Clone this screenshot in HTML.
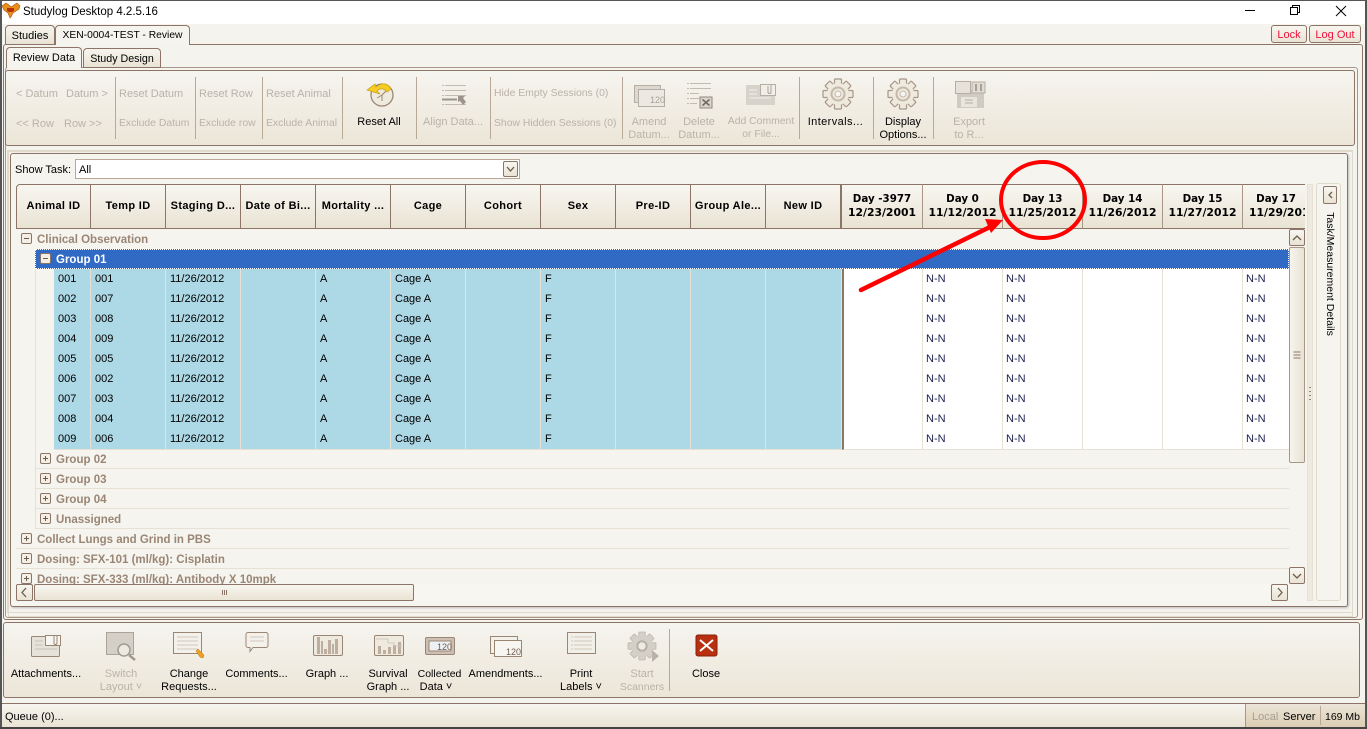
<!DOCTYPE html>
<html><head><meta charset="utf-8"><title>Studylog Desktop</title>
<style>
html,body{margin:0;padding:0;width:1367px;height:729px;overflow:hidden;background:#f5f3ee}
body{position:relative;font:11px "Liberation Sans",sans-serif;color:#000}
div,span{box-sizing:border-box}
.a{position:absolute}
.t{position:absolute;white-space:nowrap;line-height:14px;height:14px;margin-top:1px}
.c{transform:translateX(-50%)}
.d{color:#b9b2a9}
.n{font-size:10.4px}
.box{position:absolute;border:1px solid #8c7567;border-radius:3px}
.tab{position:absolute;border:1px solid #8c7567;border-radius:4px 4px 0 0;background:linear-gradient(#f6f4ee,#e9e3d4);text-align:center;line-height:20px;white-space:nowrap}
.act{background:#f6f4ef;border-bottom:0;z-index:2}
.sep{position:absolute;width:1px;background:#b9a898}
.h{position:absolute;top:184px;height:45px;border:1px solid #8c7567;border-left:0;background:linear-gradient(#f8f6f1,#e9e3d3);font-weight:bold;text-align:center;line-height:42px;font-size:11px;letter-spacing:.35px;white-space:nowrap;overflow:hidden}
.dy{line-height:13px;padding-top:8px;border-right-color:#a89688;font-family:"DejaVu Sans","Liberation Sans",sans-serif;font-size:10.3px;letter-spacing:0}
.dy b{font-size:10.8px;display:block}
.r{position:absolute;left:38px;height:20px;display:grid;grid-template-columns:37px repeat(9,75px) 76px 81px repeat(4,80px) 80px}
.r s,.r u{text-decoration:none;display:block;height:20px;line-height:21px;padding-left:4px;border-right:1px solid #e6e1d4;border-bottom:1px solid #e6e1d4;white-space:nowrap}
.r s{background:#add8e6}
.r u{background:#fff;padding-left:3px;color:#1a1f4d}
.r u:first-of-type{border-left:2px solid #8c7567}
.g{position:absolute;height:20px;border-bottom:1px solid #e6e1d4;color:#9a8675;font-weight:bold;font-size:11.5px;line-height:23px;white-space:nowrap;right:0}
.btn{position:absolute;border:1px solid #8c7567;border-radius:2px;background:linear-gradient(#f8f6f1,#e9e3d3)}
</style></head><body>

<!-- window frame -->
<div class="a" style="left:0;top:0;width:1367px;height:24px;background:#fff"></div>
<div class="a" style="left:0;top:0;width:2px;height:729px;background:#555"></div>
<div class="a" style="left:1365px;top:0;width:2px;height:729px;background:#555"></div>
<div class="a" style="left:0;top:727px;width:1367px;height:2px;background:#444"></div>
<div class="a" style="left:0;top:0;width:1367px;height:1px;background:#555"></div>
<div class="t" style="left:23px;top:5px;font-size:11.5px;margin-top:0">Studylog Desktop 4.2.5.16</div>

<!-- nested panels -->
<div class="box" style="left:3px;top:44px;width:1360px;height:576px;background:#f5f3ee"></div>
<div class="box" style="left:5px;top:67px;width:1353px;height:551px;background:#f5f3ee;border-color:#a89688"></div>
<div class="box" style="left:5px;top:70px;width:1350px;height:76px;background:linear-gradient(#f6f4ef,#ece6d8)"></div>
<div class="a" style="left:7px;top:150px;width:1346px;height:463px;border:1px solid #e0dacb;background:#f5f3ee"></div>
<div class="a" style="left:8px;top:151px;width:1345px;height:466px;border:1px solid #e0dacb"></div>
<div class="box" style="left:10px;top:153px;width:1338px;height:454px;background:#f6f4ef;box-shadow:1px 1px 2px #bbb"></div>

<!-- tabs -->
<div class="tab" style="left:5px;top:25px;width:50px;height:20px">Studies</div>
<div class="tab act" style="left:55px;top:25px;width:135px;height:20px;background:#f6f4ef;font-size:10.3px">XEN-0004-TEST - Review</div>
<div class="tab act" style="left:6px;top:47px;width:76px;height:21px;line-height:21px;background:#f6f4ef">Review Data</div>
<div class="tab" style="left:83px;top:48px;width:78px;height:20px;font-size:10.7px">Study Design</div>
<div class="btn" style="left:1271px;top:25px;width:36px;height:18px;color:#f0103c;text-align:center;line-height:18px;border-radius:3px">Lock</div>
<div class="btn" style="left:1309px;top:25px;width:52px;height:18px;color:#f0103c;text-align:center;line-height:18px;border-radius:3px">Log Out</div>

<!-- toolbar text -->
<div class="t d" style="left:16px;top:86px">&lt; Datum</div>
<div class="t d" style="left:66px;top:86px">Datum &gt;</div>
<div class="t d" style="left:16px;top:116px">&lt;&lt; Row</div>
<div class="t d" style="left:64px;top:116px">Row &gt;&gt;</div>
<div class="t d" style="left:119px;top:86px">Reset Datum</div>
<div class="t d n" style="left:119px;top:116px">Exclude Datum</div>
<div class="t d" style="left:199px;top:86px">Reset Row</div>
<div class="t d n" style="left:199px;top:116px">Exclude row</div>
<div class="t d" style="left:266px;top:86px">Reset Animal</div>
<div class="t d n" style="left:266px;top:116px">Exclude Animal</div>
<div class="t c" style="left:379px;top:114px">Reset All</div>
<div class="t d c" style="left:453px;top:114px">Align Data...</div>
<div class="t d n" style="left:494px;top:86px">Hide Empty Sessions (0)</div>
<div class="t d n" style="left:494px;top:116px">Show Hidden Sessions (0)</div>
<div class="t d c" style="left:649px;top:114px">Amend</div><div class="t d c" style="left:649px;top:127px">Datum...</div>
<div class="t d c" style="left:699px;top:114px">Delete</div><div class="t d c" style="left:699px;top:127px">Datum...</div>
<div class="t d c n" style="left:761px;top:114px">Add Comment</div><div class="t d c n" style="left:761px;top:127px">or File...</div>
<div class="t c" style="left:835.500px;top:114px;letter-spacing:.4px">Intervals...</div>
<div class="t c" style="left:903px;top:114px">Display</div><div class="t c" style="left:903px;top:127px">Options...</div>
<div class="t d c" style="left:969px;top:114px">Export</div><div class="t d c" style="left:969px;top:127px">to R...</div>
<div class="sep" style="left:115px;top:77px;height:62px"></div>
<div class="sep" style="left:195px;top:77px;height:62px"></div>
<div class="sep" style="left:262px;top:77px;height:62px"></div>
<div class="sep" style="left:342px;top:77px;height:62px"></div>
<div class="sep" style="left:416px;top:77px;height:62px"></div>
<div class="sep" style="left:490px;top:77px;height:62px"></div>
<div class="sep" style="left:622px;top:77px;height:62px"></div>
<div class="sep" style="left:799px;top:77px;height:62px"></div>
<div class="sep" style="left:873px;top:77px;height:62px"></div>
<div class="sep" style="left:933px;top:77px;height:62px"></div>

<!-- show task -->
<div class="t" style="left:15px;top:162px">Show Task:</div>
<div class="a" style="left:75px;top:159px;width:445px;height:20px;border:1px solid #b9a898;background:#fff;padding-left:3px;line-height:20px">All</div>
<div class="btn" style="left:503px;top:161px;width:15px;height:16px"></div>

<!-- headers -->
<div class="h" style="left:16px;width:75px;border-left:1px solid #8c7567;border-top-left-radius:4px">Animal ID</div>
<div class="h" style="left:91px;width:75px">Temp ID</div>
<div class="h" style="left:166px;width:75px">Staging D...</div>
<div class="h" style="left:241px;width:75px">Date of Bi...</div>
<div class="h" style="left:316px;width:75px">Mortality ...</div>
<div class="h" style="left:391px;width:75px">Cage</div>
<div class="h" style="left:466px;width:75px">Cohort</div>
<div class="h" style="left:541px;width:75px">Sex</div>
<div class="h" style="left:616px;width:75px">Pre-ID</div>
<div class="h" style="left:691px;width:75px">Group Ale...</div>
<div class="h" style="left:766px;width:76px;border-right:2px solid #8c7567">New ID</div>
<div class="h dy" style="left:842px;width:81px">Day -3977<b>12/23/2001</b></div>
<div class="h dy" style="left:923px;width:80px">Day 0<b>11/12/2012</b></div>
<div class="h dy" style="left:1003px;width:80px">Day 13<b>11/25/2012</b></div>
<div class="h dy" style="left:1083px;width:80px">Day 14<b>11/26/2012</b></div>
<div class="h dy" style="left:1163px;width:80px">Day 15<b>11/27/2012</b></div>
<div class="h dy" style="left:1243px;width:62px;border-right:0;text-align:left;padding-left:6px">&nbsp;&nbsp;Day 17<b>11/29/2012</b></div>

<!-- grid body -->
<div class="a" style="left:16px;top:229px;width:1273px;height:355px;overflow:hidden;background:#f6f4ef">
 <div class="g" style="left:0;top:0;padding-left:21px;border:0">Clinical Observation</div>
 <div class="a" style="left:19px;top:20px;width:1px;height:280px;background:#e6e1d4"></div>
 <div class="a" style="left:19px;top:20px;right:0;height:20px;background:#316ac5;border:1px dotted #fff;color:#fff;font-weight:bold;font-size:11.5px;padding-left:20px;line-height:20px">Group 01</div>
 <div class="r" style="top:40px"><s>001</s><s>001</s><s>11/26/2012</s><s></s><s>A</s><s>Cage A</s><s></s><s>F</s><s></s><s></s><s></s><u></u><u>N-N</u><u>N-N</u><u></u><u></u><u>N-N</u></div>
 <div class="r" style="top:60px"><s>002</s><s>007</s><s>11/26/2012</s><s></s><s>A</s><s>Cage A</s><s></s><s>F</s><s></s><s></s><s></s><u></u><u>N-N</u><u>N-N</u><u></u><u></u><u>N-N</u></div>
 <div class="r" style="top:80px"><s>003</s><s>008</s><s>11/26/2012</s><s></s><s>A</s><s>Cage A</s><s></s><s>F</s><s></s><s></s><s></s><u></u><u>N-N</u><u>N-N</u><u></u><u></u><u>N-N</u></div>
 <div class="r" style="top:100px"><s>004</s><s>009</s><s>11/26/2012</s><s></s><s>A</s><s>Cage A</s><s></s><s>F</s><s></s><s></s><s></s><u></u><u>N-N</u><u>N-N</u><u></u><u></u><u>N-N</u></div>
 <div class="r" style="top:120px"><s>005</s><s>005</s><s>11/26/2012</s><s></s><s>A</s><s>Cage A</s><s></s><s>F</s><s></s><s></s><s></s><u></u><u>N-N</u><u>N-N</u><u></u><u></u><u>N-N</u></div>
 <div class="r" style="top:140px"><s>006</s><s>002</s><s>11/26/2012</s><s></s><s>A</s><s>Cage A</s><s></s><s>F</s><s></s><s></s><s></s><u></u><u>N-N</u><u>N-N</u><u></u><u></u><u>N-N</u></div>
 <div class="r" style="top:160px"><s>007</s><s>003</s><s>11/26/2012</s><s></s><s>A</s><s>Cage A</s><s></s><s>F</s><s></s><s></s><s></s><u></u><u>N-N</u><u>N-N</u><u></u><u></u><u>N-N</u></div>
 <div class="r" style="top:180px"><s>008</s><s>004</s><s>11/26/2012</s><s></s><s>A</s><s>Cage A</s><s></s><s>F</s><s></s><s></s><s></s><u></u><u>N-N</u><u>N-N</u><u></u><u></u><u>N-N</u></div>
 <div class="r" style="top:200px"><s>009</s><s>006</s><s>11/26/2012</s><s></s><s>A</s><s>Cage A</s><s></s><s>F</s><s></s><s></s><s></s><u></u><u>N-N</u><u>N-N</u><u></u><u></u><u>N-N</u></div>
 <div class="g" style="left:19px;top:220px;padding-left:21px">Group 02</div>
 <div class="g" style="left:19px;top:240px;padding-left:21px">Group 03</div>
 <div class="g" style="left:19px;top:260px;padding-left:21px">Group 04</div>
 <div class="g" style="left:19px;top:280px;padding-left:21px">Unassigned</div>
 <div class="g" style="left:0;top:300px;padding-left:21px">Collect Lungs and Grind in PBS</div>
 <div class="g" style="left:0;top:320px;padding-left:21px">Dosing: SFX-101 (ml/kg): Cisplatin</div>
 <div class="g" style="left:0;top:340px;padding-left:21px">Dosing: SFX-333 (ml/kg): Antibody X 10mpk</div>
</div>

<!-- scrollbars -->
<div class="a" style="left:1289px;top:229px;width:17px;height:372px;background:#f6f4ef"></div>
<div class="btn" style="left:1289px;top:229px;width:16px;height:17px"></div>
<div class="btn" style="left:1289px;top:247px;width:16px;height:216px;background:linear-gradient(90deg,#f6f4ee,#e9e3d3);border-color:#a89688"></div>
<div class="btn" style="left:1289px;top:567px;width:16px;height:17px"></div>
<div class="a" style="left:16px;top:584px;width:1273px;height:17px;background:#f8f6f1"></div>
<div class="btn" style="left:16px;top:584px;width:17px;height:17px"></div>
<div class="btn" style="left:34px;top:584px;width:380px;height:17px"></div>
<div class="btn" style="left:1271px;top:584px;width:17px;height:17px"></div>

<!-- side strip -->
<div class="a" style="left:1307px;top:184px;width:6px;height:417px;background:#efeadf;border:1px solid #e6e1d4"></div>
<div class="a" style="left:1316px;top:183px;width:25px;height:418px;background:#f6f4ef;border:1px solid #e0dacb;border-radius:3px"></div>
<div class="btn" style="left:1323px;top:186px;width:14px;height:18px"></div>
<div class="t" style="left:1330px;top:274px;font-size:10.5px;margin-top:0;transform:translate(-50%,-50%) rotate(90deg);transform-origin:center">Task/Measurement Details</div>

<!-- bottom toolbar -->
<div class="box" style="left:3px;top:622px;width:1357px;height:76px;background:linear-gradient(#f6f4ef,#ece6d8)"></div>
<div class="t c" style="left:46px;top:666px">Attachments...</div>
<div class="t d c" style="left:121px;top:666px">Switch</div><div class="t d c" style="left:121px;top:679px">Layout ˅</div>
<div class="t c" style="left:189px;top:666px">Change</div><div class="t c" style="left:189px;top:679px">Requests...</div>
<div class="t c" style="left:256.500px;top:666px">Comments...</div>
<div class="t c" style="left:327px;top:666px">Graph ...</div>
<div class="t c" style="left:388px;top:666px">Survival</div><div class="t c" style="left:388px;top:679px">Graph ...</div>
<div class="t c" style="left:439.500px;top:666px;font-size:10.500px">Collected</div><div class="t c" style="left:436px;top:679px">Data ˅</div>
<div class="t c" style="left:505.500px;top:666px">Amendments...</div>
<div class="t c" style="left:581px;top:666px">Print</div><div class="t c" style="left:581px;top:679px">Labels ˅</div>
<div class="t d c" style="left:642px;top:666px">Start</div><div class="t d c" style="left:642px;top:679px;font-size:10.500px">Scanners</div>
<div class="sep" style="left:669px;top:629px;height:62px"></div>
<div class="t c" style="left:706px;top:666px">Close</div>

<!-- status bar -->
<div class="a" style="left:2px;top:703px;width:1363px;height:24px;border-top:1px solid #8c7567;background:linear-gradient(#f7f5f0,#eae3d4)"></div>
<div class="a" style="left:1245px;top:704px;width:120px;height:23px;border-left:1px solid #a89688;background:linear-gradient(#ece5d8,#dccdb3)"></div>
<div class="t" style="left:5px;top:709px">Queue (0)...</div>
<div class="t" style="left:1252px;top:709px;color:#a89f95">Local</div>
<div class="t" style="left:1283px;top:709px">Server</div>
<div class="sep" style="left:1320px;top:706px;height:19px"></div>
<div class="t" style="left:1325px;top:709px;font-size:10.500px">169 Mb</div>

<!-- icons overlay -->
<svg class="a" style="left:0;top:0" width="1367" height="729" viewBox="0 0 1367 729" font-family="Liberation Sans,sans-serif">
<defs>
<g id="gr"><rect x="-3.500" y="-15" width="7" height="30" rx="1"/><rect x="-3.500" y="-15" width="7" height="30" rx="1" transform="rotate(45)"/><rect x="-3.500" y="-15" width="7" height="30" rx="1" transform="rotate(90)"/><rect x="-3.500" y="-15" width="7" height="30" rx="1" transform="rotate(135)"/></g>
<g id="gear"><use href="#gr" fill="#efeade" stroke="#a89688" stroke-width="1.200"/><circle r="11" fill="#efeade"/><circle r="6.500" fill="none" stroke="#c4b8ab" stroke-width="2"/><circle r="3" fill="#f8f6f1" stroke="#c4b8ab"/></g>
</defs>

<!-- logo -->
<path d="M2 6l4-3 3 2 2 2 3-2 3-2 3 3-1 3-3 2-3 2-2 4-1 1-2-5-4-3z" fill="#e89018" stroke="#a85810" stroke-width=".6"/>
<path d="M7 8h7v3l-2 1H9l-2-1z" fill="#b83010"/>

<!-- window controls -->
<path d="M1245 10.500h10" stroke="#000" fill="none"/>
<path d="M1290.500 7.500h7v7h-7zM1292.500 7.500v-2h7v7h-2" stroke="#000" fill="none"/>
<path d="M1336 6l10 10M1346 6l-10 10" stroke="#000" fill="none"/>

<!-- combo arrow + scroll arrows -->
<path d="M507 167l3.500 4 3.500-4" stroke="#6c5a4c" stroke-width="1.300" fill="none"/>
<path d="M1293 240l4-4 4 4" stroke="#6c5a4c" stroke-width="1.300" fill="none"/>
<path d="M1293 574l4 4 4-4" stroke="#6c5a4c" stroke-width="1.300" fill="none"/>
<path d="M26 588l-4 4.500 4 4.500" stroke="#6c5a4c" stroke-width="1.300" fill="none"/>
<path d="M1278 588l4 4.500-4 4.500" stroke="#6c5a4c" stroke-width="1.300" fill="none"/>
<path d="M1332 192l-3 3 3 3" stroke="#6c5a4c" stroke-width="1.300" fill="none"/>
<path d="M1293.500 352h7M1293.500 355h7M1293.500 358h7M222.500 590v5M224.500 590v5M226.500 590v5" stroke="#8c7567" fill="none"/>
<path d="M1310 387v1M1310 391v1M1310 395v1M1310 399v1" stroke="#9a8675" stroke-width="2" fill="none"/>

<!-- tree toggles -->
<g fill="#f3efe6" stroke="#8c7567">
<rect x="21.500" y="233.500" width="10" height="10" rx="1.500"/><rect x="40.500" y="253.500" width="10" height="10" rx="1.500"/>
<rect x="40.500" y="453.500" width="10" height="10" rx="1.500"/><rect x="40.500" y="473.500" width="10" height="10" rx="1.500"/><rect x="40.500" y="493.500" width="10" height="10" rx="1.500"/><rect x="40.500" y="513.500" width="10" height="10" rx="1.500"/>
<rect x="21.500" y="533.500" width="10" height="10" rx="1.500"/><rect x="21.500" y="553.500" width="10" height="10" rx="1.500"/><rect x="21.500" y="573.500" width="10" height="10" rx="1.500"/>
</g>
<path d="M24 238.500h5M43 258.500h5M43 458.500h5M45.500 456v5M43 478.500h5M45.500 476v5M43 498.500h5M45.500 496v5M43 518.500h5M45.500 516v5M24 538.500h5M26.500 536v5M24 558.500h5M26.500 556v5M24 578.500h5M26.500 576v5" stroke="#6c5a4c" fill="none"/>

<!-- reset all -->
<circle cx="382" cy="95" r="11" fill="#efeade" stroke="#9a8675" stroke-width="1.300"/>
<path d="M382 95l5-5M382 95v6M382 95l-5 3" stroke="#9a8675" fill="none"/>
<path d="M367 90l8-6 1 3c6-5 12-4 15 2l-4 3c-3-4-7-4-10-1l3 3z" fill="#f4cc24" stroke="#c8a010" stroke-width=".7"/>

<!-- align data -->
<path d="M442 85.500h24M442 90.500h24M442 95.500h24M442 104.500h24" stroke="#c2bbb1" stroke-dasharray="2 1 21" fill="none"/>
<path d="M442 99.500h15" stroke="#9d958b" stroke-width="2" fill="none"/>
<path d="M458 96h7l-2 2 3 4-3 3-3-4-2 1z" fill="#9d958b"/>

<!-- amend -->
<rect x="634.500" y="85.500" width="26" height="17" fill="#ddd9d1" stroke="#b5aea4"/>
<rect x="638.500" y="89.500" width="26" height="17" fill="#ecE9e2" stroke="#b5aea4"/>
<text x="650" y="103" font-size="9" fill="#a8a097">120</text>

<!-- delete -->
<path d="M687 83.500h24M687 88.500h24M687 93.500h12M687 98.500h12M687 103.500h10" stroke="#c2bbb1" stroke-dasharray="2 1 21" fill="none"/>
<rect x="700" y="97" width="12" height="11" fill="#d9d5cd" stroke="#8f887f"/>
<path d="M702.500 99.500l7 6M709.500 99.500l-7 6" stroke="#70695f" stroke-width="1.500" fill="none"/>

<!-- comment -->
<rect x="746" y="85" width="29" height="20" fill="#d7d3cb"/>
<rect x="760.500" y="84.500" width="15" height="11" fill="#f2efe9" stroke="#b5aea4"/>
<path d="M768 86v6c0 2 3 2 3 0v-7" fill="none" stroke="#a8a097"/>
<path d="M749 90h8M749 94h8M749 98h22" stroke="#f0eee8" fill="none"/>

<!-- gears -->
<use href="#gear" x="838" y="94"/>
<use href="#gear" x="903" y="94"/>

<!-- export floppy -->
<path d="M957 90h27v18h-27z" fill="#cfcac2"/>
<rect x="955.500" y="81.500" width="15" height="12" fill="#e6e2da" stroke="#b5aea4"/>
<rect x="972" y="82" width="13" height="11" fill="#e0dcd4" stroke="#b5aea4"/>
<path d="M976 84v7M981 84v7" stroke="#a8a097" stroke-width="2"/>
<rect x="961" y="97" width="16" height="10" fill="#e8e5dd"/>
<path d="M965 100h8M965 103h8" stroke="#b5aea4"/>

<!-- attachments -->
<rect x="31.500" y="636.500" width="28" height="20" rx="1" fill="#e6e2da" stroke="#9a8675"/>
<rect x="45.500" y="635.500" width="15" height="10" fill="#f8f6f1" stroke="#9a8675"/>
<path d="M54 636v7c0 2 3 2 3 0v-7" fill="none" stroke="#9a8675"/>
<path d="M35 641h8M35 645h8M35 649h22" stroke="#c8c1b6" fill="none"/>

<!-- switch layout -->
<rect x="106.500" y="632.500" width="27" height="22" fill="#d4d0c8" stroke="#aaa399"/>
<circle cx="124" cy="650" r="6" fill="#ecE9e2" stroke="#a09990" stroke-width="1.500"/>
<path d="M129 655l6 5" stroke="#a09990" stroke-width="2.500" fill="none"/>

<!-- change requests -->
<rect x="173.500" y="632.500" width="28" height="21" fill="#f4f1ea" stroke="#9a8675"/>
<path d="M177 637h21M177 641h21M177 645h21M177 649h21" stroke="#cfc8bd" fill="none"/>
<path d="M196 651l2-2 6 6-1 3-3-1z" fill="#f0a020" stroke="#c07010" stroke-width=".5"/>

<!-- comments -->
<path d="M248 632.500h18a2 2 0 0 1 2 2v11a2 2 0 0 1-2 2h-13l-3 4v-4h-2a2 2 0 0 1-2-2v-11a2 2 0 0 1 2-2z" fill="#f4f1ea" stroke="#9a8675"/>
<path d="M250 637h14M250 641h14" stroke="#cfc8bd" fill="none"/>

<!-- graph -->
<rect x="313.500" y="635.500" width="29" height="20" rx="1.500" fill="#efeadf" stroke="#9a8675"/>
<path d="M317 637h3v17h-3zM321 641h2v13h-2zM324 649h3v5h-3zM328 640h3v14h-3zM332 644h2v10h-2zM335 639h3v15h-3z" fill="#bdaea0"/>

<!-- survival -->
<rect x="374.500" y="635.500" width="29" height="20" rx="1.500" fill="#efeadf" stroke="#9a8675"/>
<path d="M378 646h3v8h-3zM383 650h3v4h-3zM388 647h3v7h-3zM393 645h3v9h-3zM398 642h3v12h-3z" fill="#bdaea0"/>
<path d="M376 639h12v4h6v3h8" fill="none" stroke="#cfc8bd"/>

<!-- collected -->
<rect x="425.500" y="637.500" width="29" height="17" rx="1.500" fill="#cdbfb2" stroke="#9a8675"/>
<rect x="429" y="641" width="22" height="10" fill="#eef1f3" stroke="#9a8675"/>
<text x="437" y="650" font-size="9" fill="#6c5a4c">120</text>

<!-- amendments -->
<rect x="490.500" y="636.500" width="27" height="17" fill="#f4f1ea" stroke="#9a8675"/>
<rect x="494.500" y="640.500" width="27" height="16" fill="#f8f6f1" stroke="#9a8675"/>
<text x="506" y="655" font-size="9" fill="#6c5a4c">120</text>

<!-- print labels -->
<rect x="567.500" y="632.500" width="28" height="21" fill="#f2efe8" stroke="#9a8675"/>
<path d="M571 637h21M571 641h21M571 645h21M571 649h21" stroke="#cfc8bd" stroke-dasharray="2 1 20" fill="none"/>

<!-- start scanners -->
<g transform="translate(642 646) scale(.93)"><use href="#gr" fill="#d4d0c8" stroke="#c0bbb2"/><circle r="11" fill="#d4d0c8"/><circle r="5" fill="#eeebe4" stroke="#b5aea4" stroke-width="2"/></g>
<path d="M652 650l7 6-7 6z" fill="#b8b2a9"/>

<!-- close -->
<rect x="696" y="635" width="21" height="21" rx="2" fill="#b8300f" stroke="#8a2008"/>
<path d="M700 640l13 11M713 640l-13 11" stroke="#fff" stroke-width="2" fill="none"/>

<!-- annotation -->
<ellipse cx="1043" cy="200" rx="42" ry="38" fill="none" stroke="#f00" stroke-width="4"/>
<path d="M861 290L990 227" stroke="#f00" stroke-width="4.500" stroke-linecap="round" fill="none"/>
<path d="M1003 220l-18-1 6 14z" fill="#f00"/>
</svg>
</body></html>
